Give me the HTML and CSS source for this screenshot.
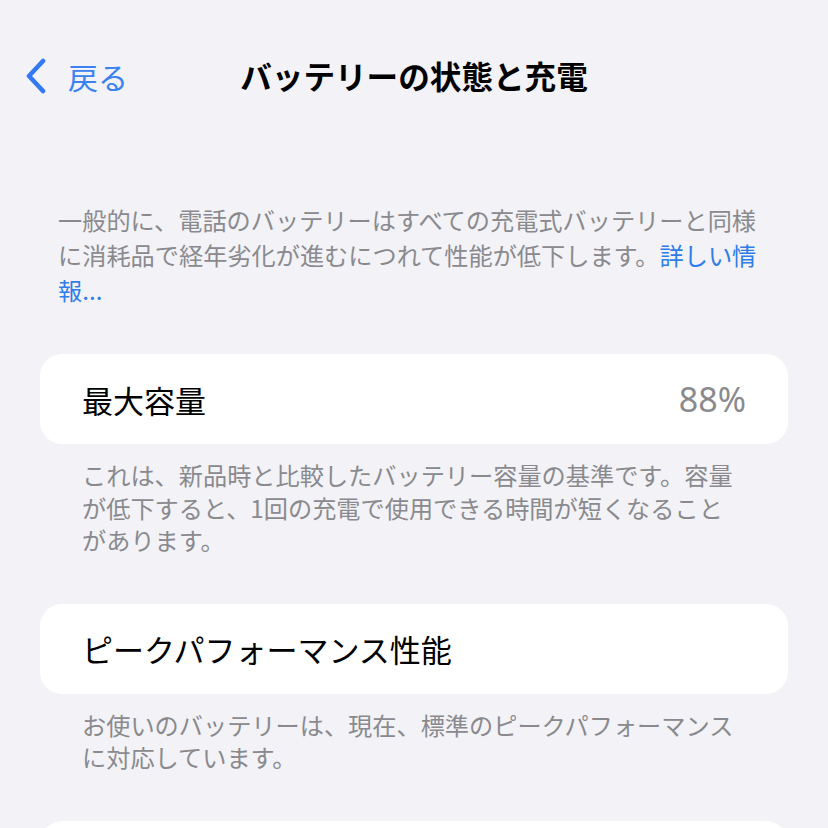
FILE: index.html
```html
<!DOCTYPE html>
<html lang="ja">
<head>
<meta charset="utf-8">
<link rel="stylesheet" href="styles.css">
</head>
<body>
<div class="page">
  <header class="nav">
    <div class="back">
      <svg class="chev" width="20" height="36" viewBox="0 0 20 36"><polyline points="17,3 3,18 17,33" fill="none" stroke="#3478f6" stroke-width="4.6" stroke-linecap="round" stroke-linejoin="round"/></svg>
      <span class="back-label">戻る</span>
    </div>
    <h1 class="title">バッテリーの状態と充電</h1>
    <div></div>
  </header>

  <p class="intro">一般的に、電話のバッテリーはすべての充電式バッテリーと同様に消耗品で経年劣化が進むにつれて性能が低下します。<span class="link">詳しい情報...</span></p>

  <section class="group first">
    <div class="card">
      <span class="label">最大容量</span>
      <span class="value">88%</span>
    </div>
    <p class="note">これは、新品時と比較したバッテリー容量の基準です。容量が低下すると、1回の充電で使用できる時間が短くなることがあります。</p>
  </section>

  <section class="group">
    <div class="card">
      <span class="label">ピークパフォーマンス性能</span>
    </div>
    <p class="note">お使いのバッテリーは、現在、標準のピークパフォーマンスに対応しています。</p>
  </section>

  <section class="group">
    <div class="card"></div>
  </section>
</div>
</body>
</html>
```

FILE: styles.css
```css
html, body {
  margin: 0;
  padding: 0;
  background: #f2f2f7;
}
body {
  font-family: "Noto Sans CJK JP", "Noto Sans", sans-serif;
  overflow: hidden;
  height: 828px;
}
.page {
  width: 828px;
}
.nav {
  margin-top: 40px;
  height: 72px;
  display: grid;
  grid-template-columns: 1fr auto 1fr;
  align-items: center;
}
.back {
  display: flex;
  align-items: center;
  padding-left: 26px;
  gap: 22px;
}
.chev {
  display: block;
}
.back-label {
  color: #3a82f0;
  font-size: 30px;
  line-height: 1;
}
.title {
  margin: 0;
  font-size: 31.6px;
  font-weight: 700;
  color: #000;
  line-height: 1;
}
.intro {
  margin: 90px 0 0 0;
  padding: 0 58px;
  font-size: 24.2px;
  line-height: 35px;
  color: #8a8a8e;
}
.link {
  color: #2f7de6;
}
.group {
  margin: 47px 40px 0 40px;
}
.group.first {
  margin-top: 47px;
}
.card {
  background: #fff;
  border-radius: 22px;
  height: 90px;
  display: flex;
  align-items: center;
  justify-content: space-between;
  padding: 0 42px;
}
.label {
  font-size: 31px;
  color: #000;
  line-height: 1;
}
.value {
  font-family: "Noto Sans", sans-serif;
  font-size: 34px;
  color: #8a8a8e;
  line-height: 1;
}
.note {
  margin: 15px 0 0 0;
  padding: 0 42px;
  font-size: 24.2px;
  line-height: 32.5px;
  color: #8a8a8e;
}
```
